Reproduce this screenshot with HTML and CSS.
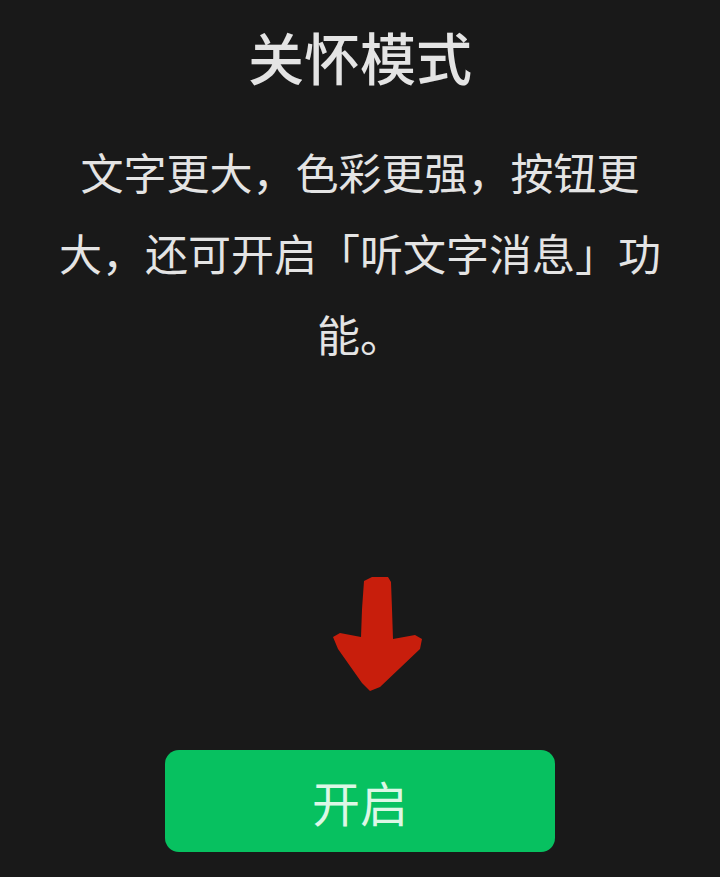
FILE: index.html
```html
<!DOCTYPE html>
<html lang="zh-CN">
<head>
<meta charset="utf-8">
<link rel="stylesheet" href="styles.css">
</head>
<body>
<main class="page">
  <h1 class="title">关怀模式</h1>
  <p class="desc">文字更大，色彩更强，按钮更大，还可开启「听文字消息」功能。</p>
  <svg class="arrow" width="110" height="120" viewBox="0 0 110 120" aria-hidden="true">
    <path d="M44 7 L52 3 L68 3 L71 8 L72 35 L73 65 L95 61 L102 65 L100 75 L60 113 L50 117 L42 109 L18 75 L13 63 L20 59 L41 63 L42 35 Z" fill="#c81e0c"/>
  </svg>
  <button class="btn">开启</button>
</main>
</body>
</html>
```

FILE: styles.css
```css
html, body {
  margin: 0;
  padding: 0;
  background: #191919;
}
body {
  width: 720px;
  height: 877px;
  overflow: hidden;
  font-family: "Noto Sans CJK SC", "Noto Sans", sans-serif;
}
.page {
  display: flex;
  flex-direction: column;
  align-items: center;
}
.title {
  margin: 16px 0 0;
  font-size: 56px;
  line-height: 80px;
  font-weight: 500;
  color: #e4e4e4;
  letter-spacing: 0;
}
.desc {
  margin: 35px 0 0;
  width: 622px;
  text-align: center;
  font-size: 43px;
  line-height: 81px;
  color: #e4e4e4;
}
.arrow {
  display: block;
  margin: 200px 0 0 30px;
}
.btn {
  margin-top: 56px;
  width: 390px;
  height: 102px;
  border: none;
  border-radius: 14px;
  background: #07c160;
  color: #dcf7e6;
  font-family: "Noto Sans CJK SC", "Noto Sans", sans-serif;
  font-size: 48px;
  padding: 0;
  line-height: 102px;
}
```
